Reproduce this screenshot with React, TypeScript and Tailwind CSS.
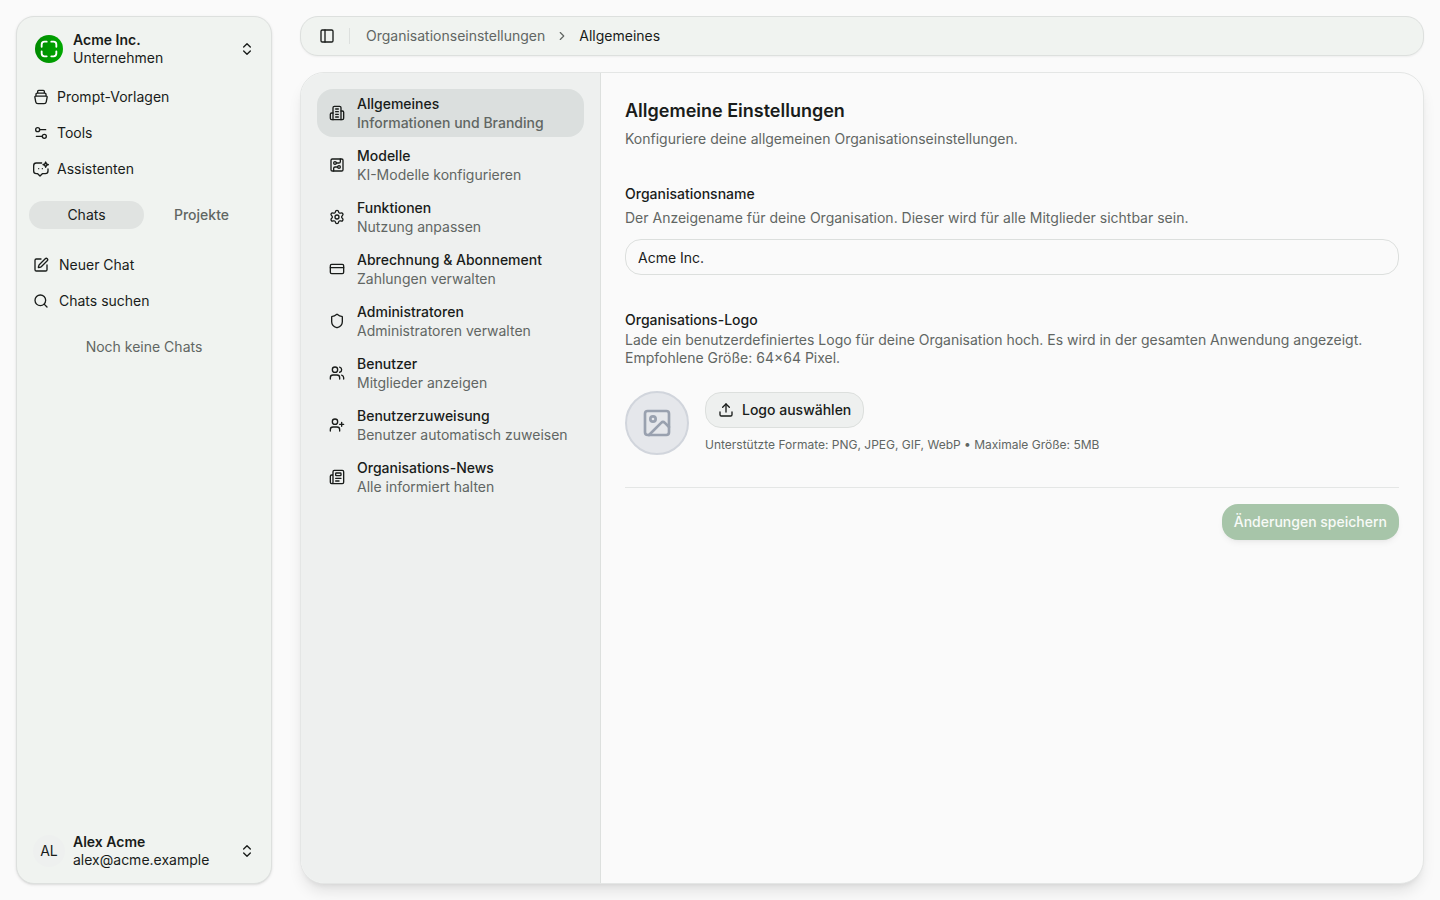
import { useState } from "react";
import type { ComponentType, ReactNode } from "react";
import {
  ChevronRight,
  ChevronsUpDown,
  CircuitBoard,
  CreditCard,
  Image,
  Newspaper,
  PanelLeft,
  Search,
  Settings,
  Settings2,
  Shield,
  SquarePen,
  Upload,
  Users,
} from "lucide-react";

type IconType = ComponentType<{ className?: string }>;

function Svg({ className, children }: { className?: string; children: ReactNode }) {
  return (
    <svg
      className={className}
      viewBox="0 0 24 24"
      fill="none"
      stroke="currentColor"
      strokeWidth={2}
      strokeLinecap="round"
      strokeLinejoin="round"
      aria-hidden="true"
    >
      {children}
    </svg>
  );
}

function LogoIcon({ className }: { className?: string }) {
  return (
    <Svg className={className}>
      <path d="M4 9.500V7a3 3 0 0 1 3-3h2.500" />
      <path d="M14.500 4H17a3 3 0 0 1 3 3v2.500" />
      <path d="M20 14.500V17a3 3 0 0 1-3 3h-2.500" />
      <path d="M9.500 20H7a3 3 0 0 1-3-3v-2.500" />
    </Svg>
  );
}

function PromptIcon({ className }: { className?: string }) {
  return (
    <Svg className={className}>
      <path d="M7 5.500V3.500A1.500 1.500 0 0 1 8.500 2h7A1.500 1.500 0 0 1 17 3.500v2" />
      <path d="M4.500 10V8A1.700 1.700 0 0 1 6.200 6.300h11.600A1.700 1.700 0 0 1 19.500 8v2" />
      <path d="M4 10.800h16a1.200 1.200 0 0 1 1.200 1.400l-1.300 7a3.400 3.400 0 0 1-3.300 2.800H7.400a3.400 3.400 0 0 1-3.300-2.800l-1.300-7A1.200 1.200 0 0 1 4 10.800Z" />
    </Svg>
  );
}

function AssistantIcon({ className }: { className?: string }) {
  return (
    <Svg className={className}>
      <path d="M13 3H5a4 4 0 0 0-4 4v8a4 4 0 0 0 4 4h2l3.500 3.500L14 19h4.500a4 4 0 0 0 4-4v-3" />
      <path d="M19 1.500 20.200 4.300 23 5.500 20.200 6.700 19 9.500 17.800 6.700 15 5.500 17.800 4.300Z" />
      <path d="M8.500 11.500h.01M14 11.500h.01" />
    </Svg>
  );
}

function BuildingIcon({ className }: { className?: string }) {
  return (
    <Svg className={className}>
      <path d="M6 22V4a2 2 0 0 1 2-2h8a2 2 0 0 1 2 2v18Z" />
      <path d="M6 12H4a2 2 0 0 0-2 2v6a2 2 0 0 0 2 2h2" />
      <path d="M18 9h2a2 2 0 0 1 2 2v9a2 2 0 0 1-2 2h-2" />
      <path d="M10 6h4M10 10h4M10 14h4M10 18h4" />
    </Svg>
  );
}

function UserAddIcon({ className }: { className?: string }) {
  return (
    <Svg className={className}>
      <path d="M16 21v-2a4 4 0 0 0-4-4H6a4 4 0 0 0-4 4v2" />
      <circle cx="9" cy="7" r="4" />
      <path d="M19 8v6M22 11h-6" />
    </Svg>
  );
}

const mainLinks: { label: string; icon: IconType }[] = [
  { label: "Prompt-Vorlagen", icon: PromptIcon },
  { label: "Tools", icon: Settings2 },
  { label: "Assistenten", icon: AssistantIcon },
];

const settingsLinks: { title: string; text: string; icon: IconType }[] = [
  { title: "Allgemeines", text: "Informationen und Branding", icon: BuildingIcon },
  { title: "Modelle", text: "KI-Modelle konfigurieren", icon: CircuitBoard },
  { title: "Funktionen", text: "Nutzung anpassen", icon: Settings },
  { title: "Abrechnung & Abonnement", text: "Zahlungen verwalten", icon: CreditCard },
  { title: "Administratoren", text: "Administratoren verwalten", icon: Shield },
  { title: "Benutzer", text: "Mitglieder anzeigen", icon: Users },
  { title: "Benutzerzuweisung", text: "Benutzer automatisch zuweisen", icon: UserAddIcon },
  { title: "Organisations-News", text: "Alle informiert halten", icon: Newspaper },
];

function AccountButton({ avatar, name, detail }: { avatar: ReactNode; name: string; detail: string }) {
  return (
    <button type="button" className="flex h-12 w-full items-center gap-2 px-2 text-left leading-[18px]">
      {avatar}
      <span className="flex min-w-0 flex-1 flex-col">
        <span className="truncate font-semibold">{name}</span>
        <span className="truncate">{detail}</span>
      </span>
      <ChevronsUpDown className="size-4" />
    </button>
  );
}

function Sidebar() {
  return (
    <aside className="flex w-64 shrink-0 flex-col rounded-[18px] border border-[#dde0de] bg-[#f0f3f0] p-2 shadow-sm">
      <AccountButton
        name="Acme Inc."
        detail="Unternehmen"
        avatar={
          <span className="flex size-8 items-center justify-center">
            <span className="flex size-7 items-center justify-center rounded-full bg-linear-to-r from-[#008a00] to-[#00a800] text-white">
              <LogoIcon className="size-[22px]" />
            </span>
          </span>
        }
      />

      <nav className="mt-2 flex flex-col gap-1">
        {mainLinks.map(({ label, icon: Icon }) => (
          <a key={label} href="#" className="flex h-8 items-center gap-2 px-2">
            <Icon className="size-4" />
            {label}
          </a>
        ))}
      </nav>

      <div className="mx-1 mt-4 grid grid-cols-2">
        <button type="button" className="h-7 rounded-full bg-[#e0e3e1]">
          Chats
        </button>
        <button type="button" className="h-7 rounded-full font-medium text-[#616663]">
          Projekte
        </button>
      </div>

      <div className="mt-5 flex flex-col gap-1">
        <button type="button" className="flex h-8 items-center gap-2.5 px-2">
          <SquarePen className="size-4" />
          Neuer Chat
        </button>
        <button type="button" className="flex h-8 items-center gap-2.5 px-2">
          <Search className="size-4" />
          Chats suchen
        </button>
      </div>
      <p className="mt-5 text-center text-[#616663]">Noch keine Chats</p>

      <div className="mt-auto">
        <AccountButton
          name="Alex Acme"
          detail="alex@acme.example"
          avatar={
            <span className="flex size-8 items-center justify-center rounded-full bg-[#eef0ef]">AL</span>
          }
        />
      </div>
    </aside>
  );
}

function TopBar() {
  return (
    <header className="flex h-10 shrink-0 items-center rounded-[18px] border border-[#dde0de] bg-[#f0f3f0] px-[18px] shadow-xs">
      <button type="button" aria-label="Seitenleiste umschalten">
        <PanelLeft className="size-4" />
      </button>
      <span className="ml-3.5 h-4 w-px bg-[#dde0de]" />
      <nav aria-label="Breadcrumb" className="ml-4 flex items-center gap-2.5">
        <a href="#" className="text-[#616663]">
          Organisationseinstellungen
        </a>
        <ChevronRight className="size-3.5 text-[#616663]" />
        <span>Allgemeines</span>
      </nav>
    </header>
  );
}

function SettingsNav() {
  const [active, setActive] = useState("Allgemeines");

  return (
    <nav className="flex w-[300px] shrink-0 flex-col gap-1 border-r border-[#dde0de] bg-[#eef0ef] p-4">
      {settingsLinks.map(({ title, text, icon: Icon }) => (
        <button
          key={title}
          type="button"
          onClick={() => setActive(title)}
          className={
            title === active
              ? "flex h-12 items-center gap-3 rounded-2xl bg-[#dbdfde] px-3 text-left font-medium"
              : "flex h-12 items-center gap-3 rounded-2xl px-3 text-left"
          }
        >
          <Icon className="size-4 shrink-0" />
          <span className="flex flex-col leading-[19px]">
            <span className="font-medium">{title}</span>
            <span className="text-[#616663]">{text}</span>
          </span>
        </button>
      ))}
    </nav>
  );
}

function GeneralSettings() {
  const [name, setName] = useState("Acme Inc.");

  return (
    <section className="min-w-0 flex-1 p-6">
      <h1 className="text-lg font-semibold leading-7">Allgemeine Einstellungen</h1>
      <p className="mt-1 text-[#616663]">Konfiguriere deine allgemeinen Organisationseinstellungen.</p>

      <form onSubmit={(e) => e.preventDefault()} className="mt-9">
        <label htmlFor="org-name" className="block font-medium leading-[18px]">
          Organisationsname
        </label>
        <p className="mt-1.5 leading-[18px] text-[#616663]">
          Der Anzeigename für deine Organisation. Dieser wird für alle Mitglieder sichtbar sein.
        </p>
        <input
          id="org-name"
          value={name}
          onChange={(e) => setName(e.target.value)}
          className="mt-3 block h-9 w-full rounded-2xl border border-[#dcdfdd] px-3 outline-none"
        />

        <h2 className="mt-9 font-medium leading-[18px]">Organisations-Logo</h2>
        <p className="mt-0.5 leading-[18px] text-[#616663]">
          Lade ein benutzerdefiniertes Logo für deine Organisation hoch. Es wird in der gesamten Anwendung
          angezeigt. Empfohlene Größe: 64×64 Pixel.
        </p>

        <div className="mt-6 flex items-center gap-4">
          <div className="flex size-16 items-center justify-center rounded-full border-2 border-gray-300 bg-gray-200 text-gray-400">
            <Image className="size-8" />
          </div>
          <div className="flex flex-col items-start gap-2">
            <button
              type="button"
              className="flex h-9 items-center gap-2 rounded-2xl border border-[#dcdfdd] bg-[#eef0ef] px-3 font-medium"
            >
              <Upload className="size-4" />
              Logo auswählen
            </button>
            <p className="text-xs leading-[18px] text-[#616663]">
              Unterstützte Formate: PNG, JPEG, GIF, WebP • Maximale Größe: 5MB
            </p>
          </div>
        </div>

        <div className="mt-8 flex justify-end border-t border-[#e4e6e5] pt-4">
          <button
            type="submit"
            disabled
            className="h-9 rounded-2xl bg-[#a7c5a9] px-3 font-medium text-[#f7faf7] shadow-md shadow-black/5"
          >
            Änderungen speichern
          </button>
        </div>
      </form>
    </section>
  );
}

export default function App() {
  return (
    <div className="flex min-h-screen gap-7 bg-[#fafafa] p-4 font-['Inter',sans-serif] text-sm text-[#191c1a]">
      <Sidebar />
      <div className="flex min-w-0 flex-1 flex-col gap-4">
        <TopBar />
        <main className="flex flex-1 overflow-hidden rounded-3xl border border-[#e4e6e5] bg-[#fafafa] shadow-lg">
          <SettingsNav />
          <GeneralSettings />
        </main>
      </div>
    </div>
  );
}
